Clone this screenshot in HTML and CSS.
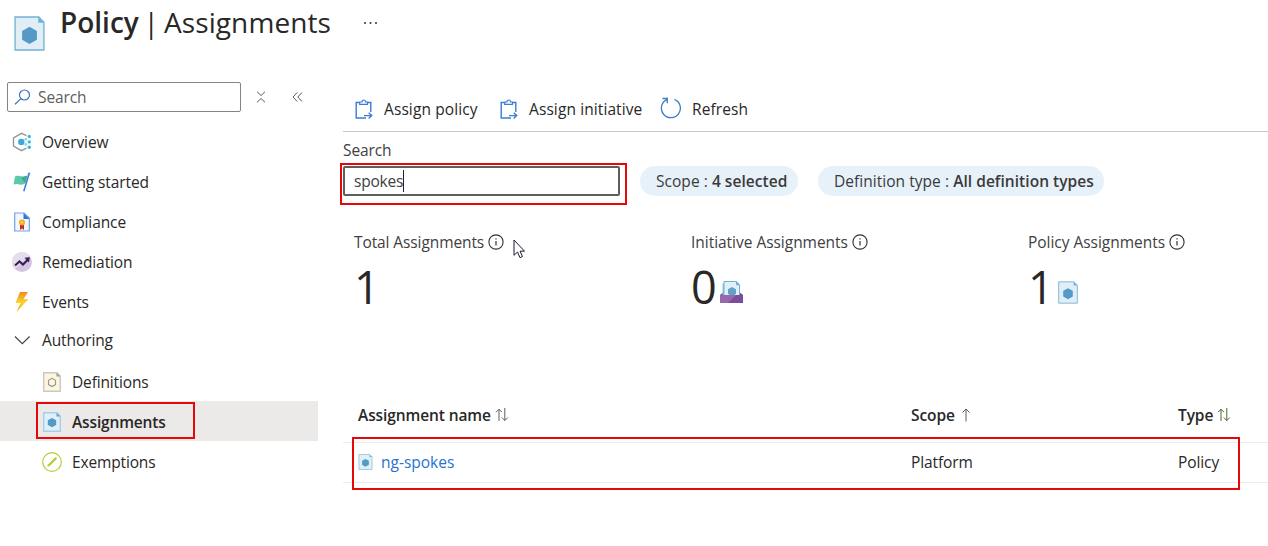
FILE: index.html
```html
<!DOCTYPE html>
<html lang="en">
<head>
<meta charset="utf-8">
<title>Policy | Assignments</title>
<link rel="stylesheet" href="styles.css">
</head>
<body>
<svg class="defs" width="0" height="0">
  <symbol id="doc" viewBox="0 0 30 34">
    <path d="M1 1H24L29 6V33H1Z" fill="#e1eef6" stroke="#6fb3d8" stroke-width="1.3"/>
    <path d="M23.500 1L29 6.500H23.500Z" fill="#6fb3d8"/>
    <path d="M15 10.500L22.200 14.500V23L15 27.200L7.800 23V14.500Z" fill="#559ac7"/>
  </symbol>
  <symbol id="info" viewBox="0 0 16 16">
    <circle cx="8" cy="8" r="7.100" fill="none" stroke="#323130" stroke-width="1.100"/>
    <path d="M8 7V11.600M8 4.300V5.600" stroke="#323130" stroke-width="1.200"/>
  </symbol>
  <symbol id="assign" viewBox="0 0 18 20">
    <path d="M11 19H1.200V3.500H4.500M12.500 3.500H15.800V13" fill="none" stroke="#3b7cd8" stroke-width="1.400"/>
    <path d="M4.700 5.300V3H7C7 .3 10.500 .3 10.500 3H12.500V5.300Z" fill="none" stroke="#3b7cd8" stroke-width="1.200"/>
    <path d="M9 16.600H16.500M13.700 13.700L16.700 16.600L13.700 19.500" fill="none" stroke="#3b7cd8" stroke-width="1.400"/>
  </symbol>
  <symbol id="sort" viewBox="0 0 14 14">
    <path d="M4 13V1.200M1 4.200L4 1.200L7 4.200M9.800 0V12.500M6.800 9.500L9.800 12.500L12.800 9.500" fill="none" stroke="currentColor" stroke-width="1"/>
  </symbol>
</svg>

<header class="header">
  <svg class="header-icon"><use href="#doc"/></svg>
  <h1 class="title"><b>Policy</b> <span class="title-sub">| Assignments</span></h1>
  <svg class="more" viewBox="0 0 16 4"><g fill="#333"><circle cx="2" cy="2" r="1"/><circle cx="7.500" cy="2" r="1"/><circle cx="13" cy="2" r="1"/></g></svg>
</header>

<div class="body">
  <nav class="sidebar">
    <div class="side-tools">
      <div class="side-search">
        <svg width="17" height="16" viewBox="0 0 17 16" fill="none" stroke="#3b72cc" stroke-width="1.200"><circle cx="10.500" cy="6" r="5"/><path d="M7 9.600L1 15.300"/></svg>
        <span>Search</span>
      </div>
      <svg class="collapse" viewBox="0 0 10 12" fill="none" stroke="#5a5a5a"><path d="M1 .7L5 4.500L9 .7M1 11.300L5 7.500L9 11.300"/></svg>
      <svg class="chevrons" viewBox="0 0 11 10" fill="none" stroke="#5a5a5a"><path d="M5.200 .5L1 5L5.200 9.500M10 .5L5.800 5L10 9.500"/></svg>
    </div>
    <ul class="menu">
      <li class="item">
        <svg class="icon" viewBox="0 0 20 20"><path d="M14.500 3.600L9.500 1.300L1.500 5.800V14.200L9.500 18.700L14.500 16.200" fill="none" stroke="#999" stroke-width="1.400"/><circle cx="9.300" cy="10" r="3.200" fill="#3da7d6"/><g fill="#7edcf2"><circle cx="13.800" cy="7.300" r="1.400"/><circle cx="13.800" cy="12.500" r="1.400"/></g><g fill="#42b3df"><circle cx="17.300" cy="4.500" r="1.700"/><circle cx="17.300" cy="9.900" r="1.700"/><circle cx="17.300" cy="15.300" r="1.700"/></g></svg>
        <span>Overview</span>
      </li>
      <li class="item">
        <svg class="icon" viewBox="0 0 20 20"><path d="M3 4.500C6 2.500 9 6 15.500 3.500L13 11.500C8 14.500 7 10.500 1.500 12.500Z" fill="#5cc9a7"/><path d="M9 5.500L15.500 3.500L13 11.500Z" fill="#43aa92"/><path d="M17 2L11.800 19.300" stroke="#3979d9" stroke-width="1.500"/><circle cx="17" cy="1.700" r="1.300" fill="#4b94ee"/></svg>
        <span>Getting started</span>
      </li>
      <li class="item">
        <svg class="icon" viewBox="0 0 20 20"><path d="M2.700 1H12L17.300 6V19H2.700Z" fill="#f2f7ff" stroke="#72a1e4" stroke-width="1.200"/><path d="M11.500 1L17.500 7H11.500Z" fill="#3972d1"/><path d="M8 12H12V18L10 16.500L8 18Z" fill="#c32b28"/><circle cx="10" cy="10.500" r="3" fill="#f4a91e"/><circle cx="10" cy="10.500" r="1.300" fill="#ffd73c"/></svg>
        <span>Compliance</span>
      </li>
      <li class="item">
        <svg class="icon" viewBox="0 0 20 20"><circle cx="10" cy="10" r="10" fill="#d3c5df"/><path d="M0 10A10 10 0 0 1 17.500 3.500L3 17Z" fill="#e6deed"/><path d="M3 13.500L7.500 9.500L11 12.500L16 7.500" fill="none" stroke="#3a1d58" stroke-width="2.100"/><path d="M12.500 5.800L17.800 5.200L17 10.500Z" fill="#3a1d58"/></svg>
        <span>Remediation</span>
      </li>
      <li class="item">
        <svg class="icon" viewBox="0 0 20 20"><defs><linearGradient id="bolt" x2="0" y2="1"><stop stop-color="#f18b25"/><stop offset=".55" stop-color="#fbd52b"/><stop offset="1" stop-color="#f39a22"/></linearGradient></defs><path d="M8 0H16L11.500 7.200H16.300L4.500 20L8.500 11H3.500Z" fill="url(#bolt)"/></svg>
        <span>Events</span>
      </li>
      <li class="item group">
        <svg class="icon" viewBox="0 0 20 20"><path d="M3 6.500L10.300 13.700L17.600 6.500" fill="none" stroke="#444" stroke-width="1.200"/></svg>
        <span>Authoring</span>
      </li>
      <li class="item child">
        <svg class="icon" viewBox="0 0 20 20"><path d="M1.700 .8H15L18.300 4V19.200H1.700Z" fill="#fdf6dd" stroke="#c9c9c4" stroke-width="1.400"/><path d="M14.500 .8L18.300 4.500H14.500Z" fill="#999"/><path d="M10 6.300L13.500 8.300V12.600L10 14.600L6.500 12.600V8.300Z" fill="none" stroke="#999" stroke-width="1.100"/></svg>
        <span>Definitions</span>
      </li>
      <li class="item child selected">
        <svg class="icon" viewBox="0 0 20 20"><path d="M1.700 .8H15L18.300 4V19.200H1.700Z" fill="#e1eff8" stroke="#a7cfe5" stroke-width="1.400"/><path d="M14.500 .8L18.300 4.500H14.500Z" fill="#5ca5ce"/><path d="M10 6L14.200 8.300V13L10 15.300L5.800 13V8.300Z" fill="#559ac7"/></svg>
        <span>Assignments</span>
        <i class="mark mark-nav"></i>
      </li>
      <li class="item child">
        <svg class="icon" viewBox="0 0 20 20"><circle cx="10" cy="10" r="9.300" fill="none" stroke="#b4cf3c" stroke-width="1.200"/><path d="M6 14L14.300 5.900" stroke="#b4cf3c" stroke-width="2.400"/></svg>
        <span>Exemptions</span>
      </li>
    </ul>
  </nav>

  <main class="main">
    <div class="toolbar">
      <svg class="tool-icon"><use href="#assign"/></svg><span class="tool t1">Assign policy</span>
      <svg class="tool-icon"><use href="#assign"/></svg><span class="tool t2">Assign initiative</span>
      <svg class="refresh" viewBox="0 0 22 22" fill="none" stroke="#3b7cc4" stroke-width="1.300"><path d="M14.500 2.400A9.500 9.500 0 1 1 6.800 2.600M2.500 1.500H7.300V6.300"/></svg><span class="tool t3">Refresh</span>
    </div>

    <div class="filter-label">Search</div>
    <div class="filters">
      <div class="field"><span>spokes</span><i class="caret"></i><i class="mark mark-field"></i></div>
      <div class="pill scope"><span>Scope : <b>4 selected</b></span></div>
      <div class="pill type"><span>Definition type : <b>All definition types</b></span></div>
    </div>

    <div class="stats">
      <section class="stat">
        <div class="stat-label"><span>Total Assignments</span><svg class="info"><use href="#info"/></svg>
          <svg class="cursor" viewBox="0 0 12 20"><path d="M1 1V16.300L4.500 13L7 18.700L9.500 17.500L7 12.200H11.500Z" fill="#fff" stroke="#191933" stroke-width="1"/></svg>
        </div>
        <div class="stat-value">1</div>
      </section>
      <section class="stat">
        <div class="stat-label wide"><span>Initiative Assignments</span><svg class="info"><use href="#info"/></svg></div>
        <div class="stat-value">0
          <svg class="initiative" viewBox="0 0 23 22"><path d="M0 14L4 11H19L23 14V22H0Z" fill="#63418c"/><path d="M2.500 2.500H5V15H2.500Z" fill="#8bc7e3"/><path d="M4 .5H16.500L19.500 3.500V16H4Z" fill="#e1eff8" stroke="#69b2d8"/><path d="M16 .5L19.700 4.200H16Z" fill="#69b2d8"/><path d="M12 6L16 8.200V13L12 15L8 13V8.200Z" fill="#629fcb"/><path d="M0 14H23V22H0Z" fill="#7b4d9b"/><path d="M0 14H16L8 22H0Z" fill="#9768ad"/></svg>
        </div>
      </section>
      <section class="stat">
        <div class="stat-label wide"><span>Policy Assignments</span><svg class="info"><use href="#info"/></svg></div>
        <div class="stat-value">1
          <svg class="policy-icon"><use href="#doc"/></svg>
        </div>
      </section>
    </div>

    <div class="table">
      <div class="row head">
        <div><span>Assignment name</span><svg class="sort"><use href="#sort"/></svg></div>
        <div><span>Scope</span><svg class="sort up" viewBox="0 0 14 14"><path d="M5 13.500V1M1.500 4.500L5 1L8.500 4.500" fill="none" stroke="currentColor"/></svg></div>
        <div><span>Type</span><svg class="sort hot"><use href="#sort"/></svg></div>
      </div>
      <div class="row data">
        <div><svg class="row-icon"><use href="#doc"/></svg><a class="link">ng-spokes</a></div>
        <div><span>Platform</span></div>
        <div><span>Policy</span></div>
        <i class="mark mark-row"></i>
      </div>
    </div>
  </main>
</div>
</body>
</html>
```
FILE: styles.css
```css
* { box-sizing: border-box; }
body {
  margin: 0;
  width: 1268px;
  height: 546px;
  overflow: hidden;
  background: #fff;
  color: #292827;
  font: 15.5px/20px "Open Sans", "Noto Sans", sans-serif;
  letter-spacing: -0.1px;
}
svg { display: block; flex: none; }
span, a, b { white-space: nowrap; }
.defs { position: absolute; }

.header { display: flex; height: 82px; padding-left: 14px; }
.header-icon { width: 31px; height: 35px; margin-top: 16px; }
.title {
  margin: 2px 0 0 15px;
  width: 303px;
  font-size: 28px;
  line-height: 40px;
  font-weight: 400;
  letter-spacing: 0;
  word-spacing: -2.5px;
  white-space: nowrap;
}
.title b { font-weight: 600; }
.title-sub { letter-spacing: 0.1px; }
.more { width: 16px; height: 4px; margin-top: 21px; }

.body { display: flex; }
.sidebar { width: 318px; flex: none; }
.side-tools { display: flex; align-items: center; height: 30px; padding-left: 7px; }
.side-search {
  display: flex;
  align-items: center;
  gap: 7px;
  width: 234px;
  height: 30px;
  padding-left: 6px;
  border: 1px solid #858483;
  border-radius: 2px;
  color: #605e5c;
}
.collapse { width: 10px; height: 12px; margin-left: 15px; }
.chevrons { width: 11px; height: 10px; margin-left: 26px; }
.menu { margin: 10px 0 0; padding: 0; list-style: none; }
.item {
  position: relative;
  display: flex;
  align-items: center;
  gap: 10px;
  height: 40px;
  padding-left: 12px;
}
.icon { width: 20px; height: 20px; }
.group { height: 39px; padding-bottom: 3px; }
.child { padding: 2px 0 0 42px; letter-spacing: -0.15px; }
.selected { background: #ebeae9; font-weight: 600; }

.mark { position: absolute; border: 2px solid #e60808; pointer-events: none; }
.mark-nav { left: 36px; top: 1px; width: 159px; height: 37px; }

.main { flex: 1; min-width: 0; padding-left: 25px; }
.toolbar {
  display: flex;
  align-items: center;
  height: 50px;
  padding: 5px 0 0 12px;
  border-bottom: 1px solid #c8c8c8;
  letter-spacing: 0.1px;
}
.tool-icon { width: 18px; height: 20px; }
.tool { margin-left: 11px; }
.t1 { width: 116px; }
.t2 { width: 131px; }
.refresh { width: 22px; height: 22px; margin-top: -2px; }
.t3 { margin-left: 10px; }
.filter-label { height: 34px; padding-top: 8px; color: #41403f; }
.filters { display: flex; gap: 20px; }
.field {
  position: relative;
  display: flex;
  align-items: center;
  width: 277px;
  height: 30px;
  padding-left: 9px;
  border: 2px solid #605e5c;
  border-radius: 2px;
  color: #41403f;
  letter-spacing: -0.2px;
}
.caret { width: 1px; height: 22px; background: #222; }
.mark-field { left: -5px; top: -5px; width: 287px; height: 42px; }
.pill {
  display: flex;
  align-items: center;
  height: 30px;
  padding-left: 16px;
  border-radius: 15px;
  background: #e7f1fa;
  color: #3b3a39;
  letter-spacing: 0.04px;
}
.pill b { font-weight: 600; }
.scope { width: 158px; }
.type { width: 286px; }

.stats { display: grid; grid-template-columns: 337px 337px 1fr; height: 192px; padding: 36px 0 0 11px; }
.stat-label { position: relative; display: flex; align-items: center; gap: 4px; height: 20px; color: #41403f; }
.wide { letter-spacing: -0.03px; }
.info { width: 16px; height: 16px; }
.cursor { position: absolute; left: 159px; top: 7px; width: 12px; height: 20px; }
.stat-value { display: flex; height: 61px; font-size: 45px; line-height: 69px; letter-spacing: -1px; }
.initiative { width: 23px; height: 22px; margin: 29px 0 0 4px; }
.policy-icon { width: 20px; height: 23px; margin: 29px 0 0 5px; }

.row { position: relative; display: grid; grid-template-columns: 553px 267px 1fr; align-items: center; padding-left: 15px; border-bottom: 1px solid #ebebeb; }
.row > div { display: flex; align-items: center; }
.head { height: 55px; font-weight: 600; }
.data { height: 40px; padding-bottom: 1px; }
.sort { width: 14px; height: 14px; margin-left: 4px; color: #605e5c; }
.up { margin-left: 6px; }
.hot { color: #4e6a2d; }
.row-icon { width: 15px; height: 16px; }
.link { margin-left: 8px; color: #2673d1; letter-spacing: 0; }
.mark-row { left: 9px; top: -6px; width: 888px; height: 53px; }
```
